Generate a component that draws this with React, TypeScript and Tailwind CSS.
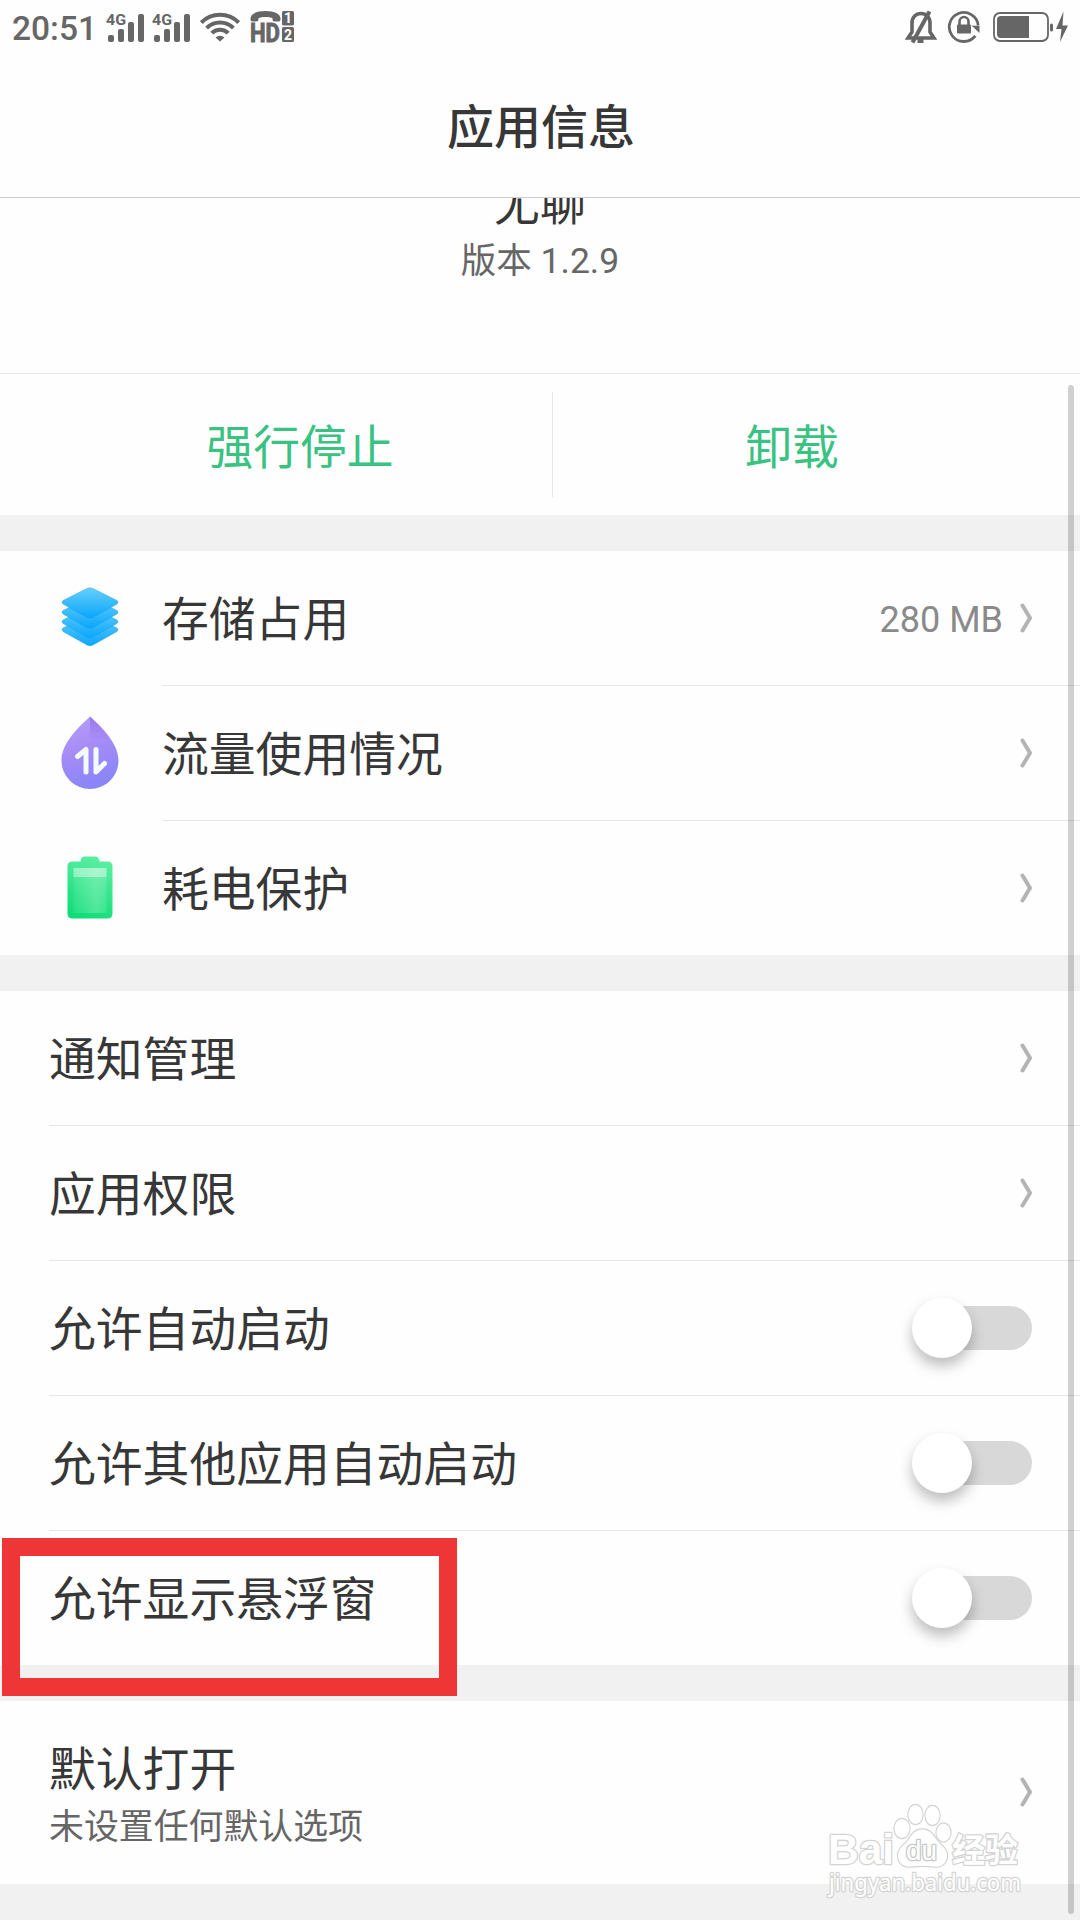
import type { ReactNode } from 'react'

function SignalIcon() {
  return (
    <svg width="40" height="32" viewBox="0 0 40 32" fill="#666">
      <text x="0" y="13.5" fontSize="14.5" fontWeight="700" textLength="20" lengthAdjust="spacingAndGlyphs" fontFamily="Roboto, sans-serif">4G</text>
      <rect x="2" y="24" width="6" height="7" rx="2" />
      <rect x="12" y="18" width="6" height="13" rx="2" />
      <rect x="22" y="11" width="6" height="20" rx="2" />
      <rect x="32" y="3" width="6" height="28" rx="2" />
    </svg>
  )
}

function WifiIcon() {
  return (
    <svg width="40" height="32" viewBox="0 0 40 32" fill="none" stroke="#666" strokeWidth="4">
      <path d="M1.3 11.5a26.5 26.5 0 0 1 37.4 0" />
      <path d="M6.6 17a19 19 0 0 1 26.8 0" />
      <path d="M11.8 22.2a11.6 11.6 0 0 1 16.4 0" />
      <path d="M15.5 26.5a7 7 0 0 1 9 0L20 30.5z" fill="#666" stroke="none" />
    </svg>
  )
}

function HdIcon() {
  return (
    <svg className="overflow-visible" width="45" height="34" viewBox="0 0 45 34" fill="#666">
      <path d="M0.5 9.5C0 4 6 1 15.5 1S31 4 30.500 9.500q0 2-2 2h-4q-2 0-2-2V8C19 6.500 12 6.500 8.500 8v1.500q0 2-2 2h-4q-2 0-2-2z" />
      <text x="0" y="31.5" fontSize="25" fontWeight="700" textLength="30" lengthAdjust="spacingAndGlyphs" stroke="#666" strokeWidth="0.9" fontFamily="Roboto, sans-serif">HD</text>
      <rect x="32" y="1" width="12" height="14.5" rx="1.5" />
      <rect x="32" y="17" width="12" height="15" rx="1.5" />
      <g fill="#fff" fontSize="14" fontWeight="700" fontFamily="Roboto, sans-serif" textAnchor="middle">
        <text x="38" y="13.3">1</text>
        <text x="38" y="29.5">2</text>
      </g>
    </svg>
  )
}

function MutedBellIcon() {
  return (
    <svg width="32" height="34" viewBox="0 0 32 34" fill="none" stroke="#666" strokeWidth="3.6">
      <path d="M3 28h26l-4-6v-9c0-6-4-9.5-9-9.5S7 7 7 13v9z" />
      <path d="M7.5 32.5 24.5 1.5" strokeWidth="4" />
      <path d="M12.500 31h6" strokeWidth="4" />
    </svg>
  )
}

function RotationLockIcon() {
  return (
    <svg width="34" height="34" viewBox="0 0 34 34" fill="none" stroke="#666" strokeWidth="2.8">
      <path d="M31.2 15.5A14.5 14.5 0 1 0 28.3 25.8" />
      <path d="M24.5 15.5 32.5 16v7z" fill="#666" stroke="none" />
      <rect x="10" y="14.5" width="14" height="9" rx="1" fill="#666" stroke="none" />
      <path d="M12.5 15v-3.500a4.5 4.5 0 0 1 9 0V15" strokeWidth="2.6" />
    </svg>
  )
}

function BatteryStatusIcon() {
  return (
    <svg width="76" height="32" viewBox="0 0 76 32" fill="#666">
      <rect x="1" y="2" width="54" height="28" rx="6" fill="none" stroke="#666" strokeWidth="1.8" />
      <path d="M8 5h28v22H8a4 4 0 0 1-4-4V9a4 4 0 0 1 4-4z" />
      <rect x="57" y="12.5" width="3" height="8" rx="1.5" />
      <path d="M70.5 0.5 63 18h5.500L67 31l8-16.500h-5.500z" />
    </svg>
  )
}

function StorageIcon() {
  return (
    <svg className="-mt-1" width="58" height="60" viewBox="0 0 58 60">
      <defs>
        <linearGradient id="layer" x1="0" y1="0" x2="0" y2="1">
          <stop offset="0" stopColor="#66cffc" />
          <stop offset="1" stopColor="#0ba6fa" />
        </linearGradient>
      </defs>
      {[27.5, 19.5, 10, 0].map((y) => (
        <path
          key={y}
          transform={`translate(0 ${y})`}
          d="M26 1.5Q29 0 32 1.5L56 13.5Q58 15 56 17L32 30.5Q29 32 26 30.5L2 17Q0 15 2 13.5z"
          fill="url(#layer)"
          stroke="#1497e2"
          strokeWidth="0.4"
        />
      ))}
    </svg>
  )
}

function DataIcon() {
  return (
    <svg className="-mt-px" width="58" height="74" viewBox="0 0 58 74">
      <defs>
        <linearGradient id="drop" x1="0" y1="0" x2="0.3" y2="1">
          <stop offset="0" stopColor="#b9a0f6" />
          <stop offset="0.5" stopColor="#a68cf6" />
          <stop offset="1" stopColor="#8b85f8" />
        </linearGradient>
        <linearGradient id="dropShade" x1="0" y1="0" x2="0" y2="1">
          <stop offset="0" stopColor="#8f68ea" stopOpacity="0.7" />
          <stop offset="0.55" stopColor="#8f68ea" stopOpacity="0" />
        </linearGradient>
      </defs>
      <path d="M29 0.5C20 9 0.5 26 0.5 44.5a28.5 28.5 0 0 0 57 0C57.5 26 38 9 29 0.5z" fill="url(#drop)" />
      <path d="M29 0.5C38 9 57.5 26 57.5 44.5H29z" fill="url(#dropShade)" />
      <path d="M16.5 40.5 25 33.5V56M35 33.5V56l8.500-8.500" fill="none" stroke="#f4fbff" strokeWidth="5" strokeLinecap="round" strokeLinejoin="round" />
    </svg>
  )
}

function PowerIcon() {
  return (
    <svg width="46" height="64" viewBox="0 0 46 64">
      <defs>
        <linearGradient id="cell" x1="0.6" y1="0" x2="0.3" y2="1">
          <stop offset="0" stopColor="#5ceea2" />
          <stop offset="1" stopColor="#0ddd76" />
        </linearGradient>
        <linearGradient id="cellInner" x1="0" y1="0" x2="1" y2="0">
          <stop offset="0" stopColor="#fff" stopOpacity="0.08" />
          <stop offset="0.7" stopColor="#fff" stopOpacity="0.22" />
          <stop offset="1" stopColor="#fff" stopOpacity="0.12" />
        </linearGradient>
      </defs>
      <path d="M18 0.5h10q4 0 4.500 5H40.5q5 0 5 5v47q0 5-5 5h-35q-5 0-5-5v-47q0-5 5-5H13.500q.5-5 4.500-5z" fill="url(#cell)" />
      <rect x="6.5" y="12" width="33" height="45" fill="url(#cellInner)" />
      <rect x="6.5" y="12" width="33" height="9" fill="#fff" fillOpacity="0.4" />
    </svg>
  )
}

function Chevron() {
  return (
    <svg className="-mt-px shrink-0" width="12" height="30" viewBox="0 0 12 30" fill="none" stroke="#b4b4b4" strokeWidth="4" strokeLinecap="round" strokeLinejoin="round">
      <path d="M2.5 2.5 10 15 2.5 27.5" />
    </svg>
  )
}

function Switch() {
  return (
    <div className="flex h-11 w-[112px] items-center rounded-full bg-[#d8d8d8]">
      <div className="-ml-2 size-[60px] shrink-0 rounded-full bg-white shadow-[0_8px_14px_rgba(0,0,0,0.26)]" />
    </div>
  )
}

function Gap() {
  return <div className="h-9 shrink-0 bg-[#f1f1f1]" />
}

interface RowProps {
  label: string
  icon?: ReactNode
  value?: string
  toggle?: boolean
  last?: boolean
}

function Row({ label, icon, value, toggle, last }: RowProps) {
  return (
    <div className={icon ? 'flex' : 'flex pl-[49px]'}>
      {icon && <div className="flex w-[162px] items-center justify-center pl-[18px]">{icon}</div>}
      <div
        className={
          last
            ? 'flex h-[134px] flex-1 items-center justify-between pr-12'
            : 'flex h-[135px] flex-1 items-center justify-between border-b border-[#e6e6e6] pr-12'
        }
      >
        <span className="pt-1 text-[46.8px] leading-[68px]">{label}</span>
        {toggle ? (
          <Switch />
        ) : (
          <div className="flex items-center gap-[17px]">
            {value && <span className="pt-[3px] text-[36px] leading-none text-[#8a8a8a]">{value}</span>}
            <Chevron />
          </div>
        )}
      </div>
    </div>
  )
}

function StatusBar() {
  return (
    <div className="flex h-[54px] items-center justify-between pl-3 pr-[11px]">
      <div className="flex items-center">
        <span className="w-[94px] pt-[3px] text-[33.5px] font-medium leading-none text-[#666]">20:51</span>
        <div className="flex items-center gap-[6px]">
          <SignalIcon />
          <SignalIcon />
        </div>
        <div className="ml-2 flex items-center gap-[10px]">
          <WifiIcon />
          <HdIcon />
        </div>
      </div>
      <div className="flex items-center">
        <MutedBellIcon />
        <div className="ml-[10px]">
          <RotationLockIcon />
        </div>
        <div className="ml-[12px]">
          <BatteryStatusIcon />
        </div>
      </div>
    </div>
  )
}

function Watermark() {
  return (
    <svg className="absolute left-[820px] top-[1796px]" width="210" height="108" viewBox="0 0 210 108" fill="#fff" stroke="#d4d4d4" strokeWidth="2.6" paintOrder="stroke" strokeLinejoin="round">
      <text x="8" y="68" fontSize="43" fontWeight="700" textLength="66" lengthAdjust="spacingAndGlyphs" fontFamily="Liberation Sans, sans-serif">Bai</text>
      <g strokeWidth="2.4">
        <ellipse cx="82" cy="32.5" rx="7.500" ry="9.500" />
        <ellipse cx="95.5" cy="18.5" rx="7" ry="9.500" />
        <ellipse cx="112.5" cy="19.5" rx="7" ry="9.500" />
        <ellipse cx="123.5" cy="36.5" rx="7" ry="9" />
        <path d="M102 33.5c8 0 11 5 15 11 4 5 10 8 10 15 0 8-6 12-13 11-8-1-15-1-22 0-9 1-14-4-14-11s6-10 10-15c4-6 7-11 14-11z" />
      </g>
      <text x="86" y="64" fontSize="27" fontWeight="400" textLength="31" lengthAdjust="spacingAndGlyphs" stroke="#c8c8c8" fontFamily="Liberation Sans, sans-serif">du</text>
      <text x="132" y="66" fontSize="33" fontWeight="700" fontFamily="Noto Sans CJK SC, sans-serif">经验</text>
      <text x="9" y="95" fontSize="23" textLength="192" lengthAdjust="spacingAndGlyphs" fontFamily="Noto Sans, sans-serif">jingyan.baidu.com</text>
    </svg>
  )
}

export default function App() {
  return (
    <div className="relative flex h-[1920px] w-[1080px] flex-col overflow-hidden bg-[#fefefe] font-[Roboto,'Noto_Sans_CJK_SC',sans-serif] text-[#373737]">
      <StatusBar />
      <header className="flex h-[144px] items-center justify-center border-b border-[#cfcfcf] pl-[2px] pt-[4px]">
        <h1 className="text-[47px] font-medium leading-[68px]">应用信息</h1>
      </header>

      <div className="flex h-[176px] flex-col items-center overflow-hidden border-b border-[#e6e6e6]">
        <div className="-mt-[28px] text-[46px] leading-[68px]">尤聊</div>
        <div className="-mt-[3px] text-[35.5px] leading-[52px] text-[#666]">版本 1.2.9</div>
      </div>
      <div className="flex h-[141px] items-center text-[46.8px] leading-[68px] text-[#3ac282]">
        <div className="flex h-[105px] w-[553px] items-center justify-center border-r border-[#e6e6e6] pl-12 pt-[6px]">强行停止</div>
        <div className="flex flex-1 justify-center pr-[49px] pt-[6px]">卸载</div>
      </div>

      <Gap />
      <Row label="存储占用" icon={<StorageIcon />} value="280 MB" />
      <Row label="流量使用情况" icon={<DataIcon />} />
      <Row label="耗电保护" icon={<PowerIcon />} last />
      <Gap />
      <Row label="通知管理" />
      <Row label="应用权限" />
      <Row label="允许自动启动" toggle />
      <Row label="允许其他应用自动启动" toggle />
      <Row label="允许显示悬浮窗" toggle last />
      <Gap />
      <div className="flex h-[183px] items-center justify-between pl-[49px] pr-12">
        <div className="pt-1">
          <div className="text-[46.8px] leading-[68px]">默认打开</div>
          <div className="-mt-[2px] text-[34.9px] leading-[52px] text-[#666]">未设置任何默认选项</div>
        </div>
        <Chevron />
      </div>
      <Gap />

      <div className="absolute left-[1068px] top-[385px] h-[1529px] w-[6px] rounded-full bg-black/18" />
      <div className="absolute left-[2px] top-[1538px] h-[158px] w-[455px] border-[18px] border-[#ef3636]" />
      <Watermark />
    </div>
  )
}
